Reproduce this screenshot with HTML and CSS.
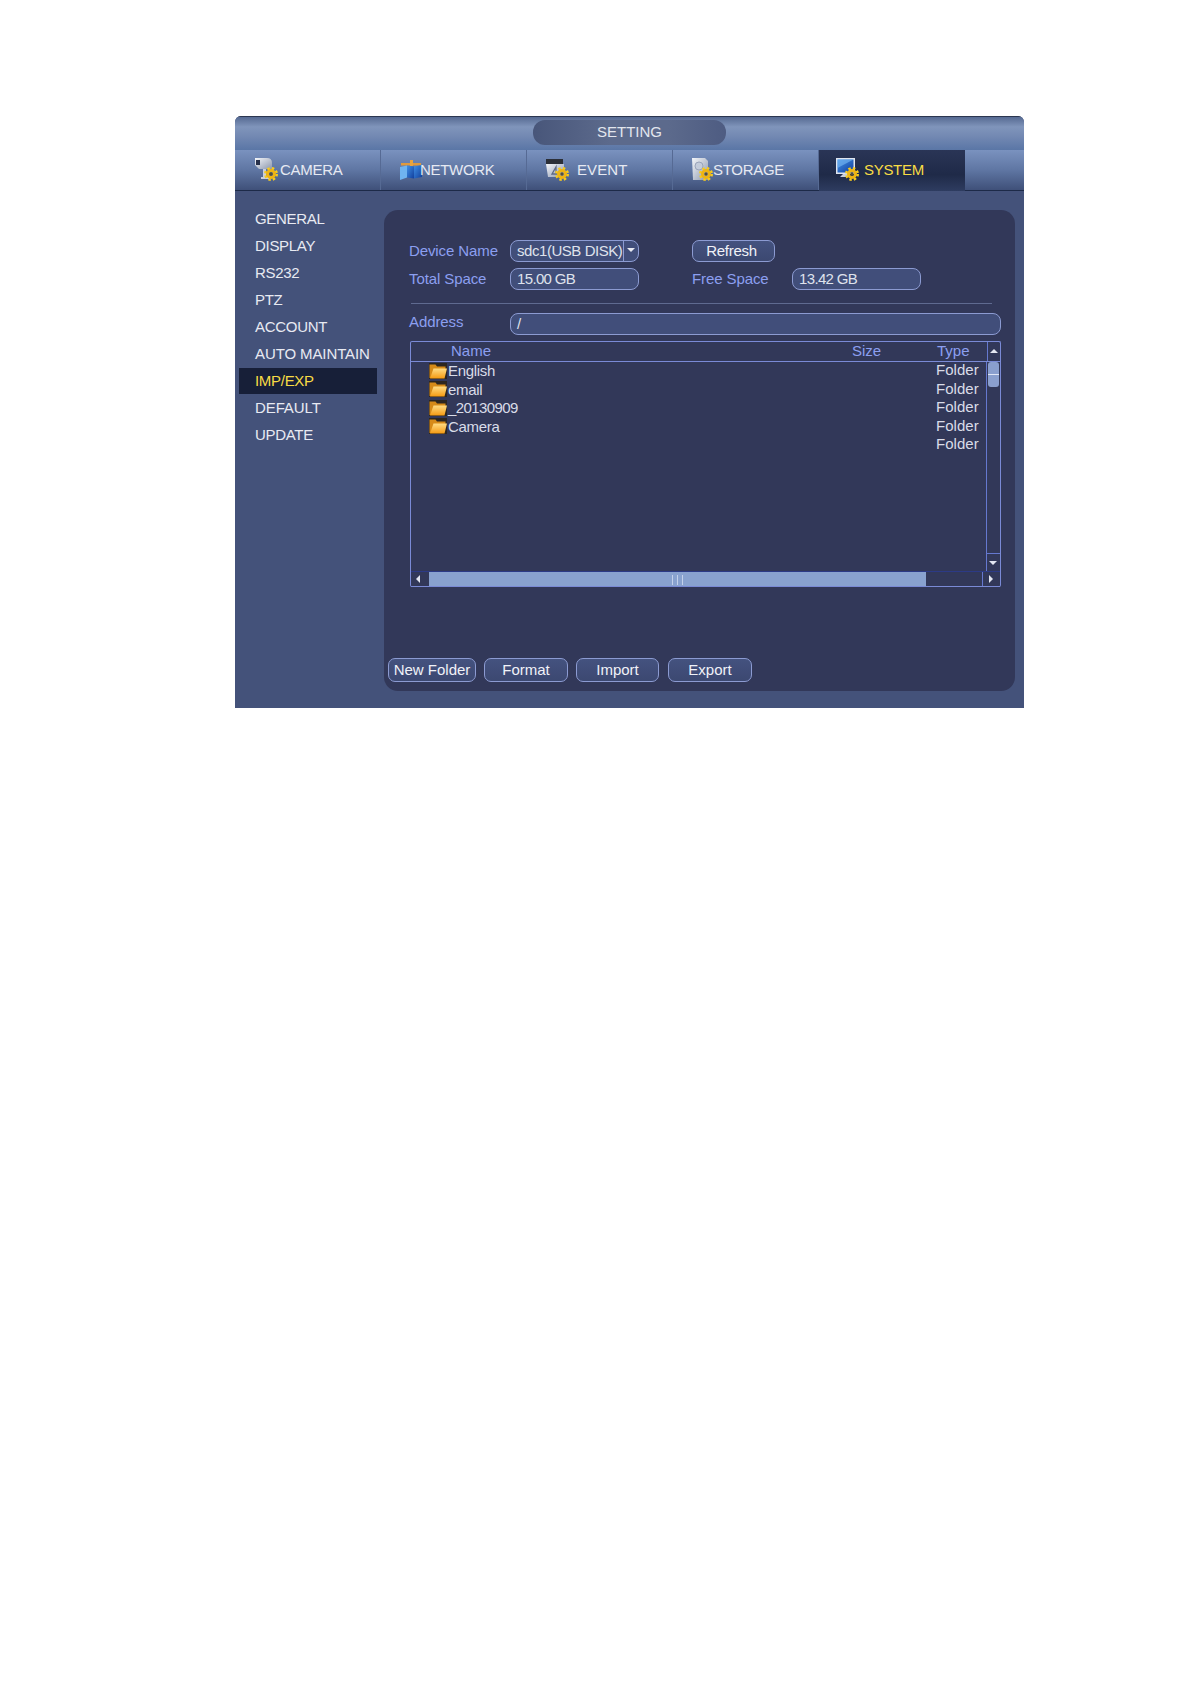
FILE: index.html
```html
<!DOCTYPE html>
<html>
<head>
    <meta charset="utf-8" />
    <title>SETTING</title>
    <link rel="stylesheet" href="styles.css">
</head>
<body>
    <svg class="defs" width="0" height="0">
        <defs>
            <linearGradient id="metal" x1="0" y1="0" x2="1" y2="1">
                <stop offset="0" stop-color="#f4f6fa" />
                <stop offset="1" stop-color="#8c97ad" />
            </linearGradient>
            <linearGradient id="blue" x1="0" y1="0" x2="1" y2="1">
                <stop offset="0" stop-color="#3f8fe6" />
                <stop offset="1" stop-color="#123f9c" />
            </linearGradient>
            <linearGradient id="folderfront" x1="0" y1="0" x2="0" y2="1">
                <stop offset="0" stop-color="#ffdc84" />
                <stop offset="1" stop-color="#f59a12" />
            </linearGradient>
            <symbol id="gear" viewBox="0 0 14 14">
                <circle cx="7" cy="7" r="5.7" fill="none" stroke="#f7cb1e" stroke-width="2.600" stroke-dasharray="2.400 2.100" />
                <circle cx="7" cy="7" r="3.500" fill="none" stroke="#eeb414" stroke-width="3" />
                <circle cx="7" cy="7" r="1.700" fill="#55503a" />
            </symbol>
            <symbol id="folder" viewBox="0 0 18 16">
                <rect x="0" y="0" width="18" height="16" fill="#2c2620" />
                <path d="M0.500 15V1.500h6l1.500 2h8.500V7H5L2 15z" fill="#d68a18" />
                <path d="M1 15.500L4.500 5.500H18L15.500 15.500z" fill="url(#folderfront)" />
            </symbol>
        </defs>
    </svg>

    <div class="window">
        <div class="titlebar">
            <div class="titlepill">SETTING</div>
        </div>

        <div class="tabs">
            <div class="tab tab-camera">
                <svg class="tabicon" width="24" height="24" viewBox="0 0 24 24">
                    <path d="M1 1h12q5 0 5 5v6H5L1 8z" fill="url(#metal)" />
                    <rect x="2" y="3" width="4" height="5" fill="#27304a" />
                    <path d="M9 12h3v8h3v2H7v-2h2z" fill="#c9cfdc" />
                    <use href="#gear" x="10" y="10" width="14" height="14" />
                </svg>
                <span>CAMERA</span>
            </div>
            <div class="tab tab-network">
                <svg class="tabicon" width="22" height="24" viewBox="0 0 22 24">
                    <path d="M1 6h20v2.500H1z" fill="#e09a3c" />
                    <path d="M10 3h3v6h-3z" fill="#e8a33e" />
                    <path d="M0 10l7-1.500v12L0 23z" fill="#6fb4f0" />
                    <path d="M7 8.500l7 1v12l-7-1z" fill="url(#blue)" />
                    <path d="M14 9.500l8-1.500v12l-8 1.500z" fill="url(#blue)" />
                </svg>
                <span>NETWORK</span>
            </div>
            <div class="tab tab-event">
                <svg class="tabicon" width="24" height="24" viewBox="0 0 24 24">
                    <path d="M1 2h17v5H1z" fill="#2b2f38" />
                    <path d="M1 7h18v13H3z" fill="url(#metal)" />
                    <path d="M7 17l4-7v7zM11 17h3" fill="none" stroke="#5d6a86" stroke-width="1.300" />
                    <use href="#gear" x="10" y="10" width="14" height="14" />
                </svg>
                <span>EVENT</span>
            </div>
            <div class="tab tab-storage">
                <svg class="tabicon" width="22" height="24" viewBox="0 0 22 24">
                    <path d="M1 1h13l3 3v19H2z" fill="url(#metal)" />
                    <circle cx="8" cy="9" r="4" fill="#c4ccdb" stroke="#9aa4ba" />
                    <use href="#gear" x="8" y="10" width="14" height="14" />
                </svg>
                <span>STORAGE</span>
            </div>
            <div class="tab tab-system active">
                <svg class="tabicon" width="23" height="24" viewBox="0 0 23 24">
                    <rect x="0" y="1" width="19" height="16" fill="#dfe5ef" />
                    <rect x="1.500" y="2.500" width="16" height="13" fill="url(#blue)" />
                    <path d="M1.500 2.500h16L1.500 11z" fill="#6fb0ee" opacity=".7" />
                    <path d="M7 17h5l1 3H4z" fill="#c9cfdc" />
                    <use href="#gear" x="9" y="10" width="14" height="14" />
                </svg>
                <span>SYSTEM</span>
            </div>
            <div class="tabfill"></div>
        </div>

        <div class="content">
            <ul class="sidemenu">
                <li>GENERAL</li>
                <li>DISPLAY</li>
                <li>RS232</li>
                <li>PTZ</li>
                <li>ACCOUNT</li>
                <li class="loose">AUTO MAINTAIN</li>
                <li class="active">IMP/EXP</li>
                <li class="loose">DEFAULT</li>
                <li>UPDATE</li>
            </ul>

            <div class="panel">
                <div class="row">
                    <label class="fieldlabel">Device Name</label>
                    <div class="field select">
                        <span class="value">sdc1(USB DISK)</span>
                        <span class="selectarrow"></span>
                    </div>
                    <button class="btn refresh">Refresh</button>
                </div>
                <div class="row">
                    <label class="fieldlabel">Total Space</label>
                    <div class="field"><span class="value">15.00 GB</span></div>
                    <label class="fieldlabel freelabel">Free Space</label>
                    <div class="field"><span class="value">13.42 GB</span></div>
                </div>
                <div class="divider"></div>
                <div class="row">
                    <label class="fieldlabel addresslabel">Address</label>
                    <div class="field address"><span class="value">/</span></div>
                </div>

                <div class="filelist">
                    <div class="listhead">
                        <span>Name</span>
                        <span>Size</span>
                        <span>Type</span>
                        <div class="scrollbtn up"></div>
                    </div>
                    <div class="listbody">
                        <div class="names">
                            <div class="namerow"><svg class="foldericon"><use href="#folder" /></svg>English</div>
                            <div class="namerow"><svg class="foldericon"><use href="#folder" /></svg>email</div>
                            <div class="namerow digits"><svg class="foldericon"><use href="#folder" /></svg>_20130909</div>
                            <div class="namerow"><svg class="foldericon"><use href="#folder" /></svg>Camera</div>
                        </div>
                        <div class="types">
                            <div>Folder</div>
                            <div>Folder</div>
                            <div>Folder</div>
                            <div>Folder</div>
                            <div>Folder</div>
                        </div>
                        <div class="vscroll">
                            <div class="vthumb"></div>
                            <div class="scrollbtn down"></div>
                        </div>
                    </div>
                    <div class="hscroll">
                        <div class="hbtn left"></div>
                        <div class="hthumb"></div>
                        <div class="htrack"></div>
                        <div class="hbtn right"></div>
                    </div>
                </div>

                <div class="actions">
                    <button class="btn newfolder">New Folder</button>
                    <button class="btn format">Format</button>
                    <button class="btn import">Import</button>
                    <button class="btn export">Export</button>
                </div>
            </div>
        </div>
    </div>
</body>
</html>
```

FILE: styles.css
```css
body {
    margin: 0;
    background-color: white;
    font-family: "Liberation Sans", Arial, sans-serif;
    font-size: 15px;
}

.defs {
    position: absolute;
}

.window {
    width: 789px;
    height: 592px;
    margin: 116px 0 0 235px;
    background-color: #44527a;
    border-radius: 6px 6px 0 0;
    overflow: hidden;
}

.titlebar {
    height: 34px;
    box-sizing: border-box;
    padding: 3px 0 0 298px;
    border-top: 1px solid #2b3650;
    background: linear-gradient(#566a92, #8095bb 30%, #7288b2 60%, #5a76a6);
}

.titlepill {
    width: 193px;
    height: 25px;
    line-height: 24px;
    text-align: center;
    color: #e3e6ee;
    border-radius: 12px;
    background: linear-gradient(90deg, #48567a, #5c6a8c 40%, #5c6a8c 70%, #4e5c82);
}

.tabs {
    display: flex;
    height: 41px;
    box-sizing: border-box;
    border-bottom: 1px solid #1d2a48;
}

.tab, .tabfill {
    background: linear-gradient(#7a92bf, #5f76a3 50%, #3f5079);
}

.tab {
    display: flex;
    align-items: center;
    width: 146px;
    box-sizing: border-box;
    color: #e6e9f2;
    border-right: 1px solid #566a94;
}

.tabfill {
    flex: 1;
}

.tabicon {
    flex: none;
    margin-top: -3px;
}

.tab span {
    margin-top: -2px;
    letter-spacing: -0.3px;
}

.tab-camera {
    padding-left: 19px;
    gap: 2px;
}

.tab-network {
    padding-left: 19px;
}

.tab-network .tabicon {
    margin-right: -2px;
}

.tab-event {
    padding-left: 18px;
    gap: 8px;
}

.tab-event span {
    letter-spacing: 0.1px;
}

.tab-storage {
    padding-left: 18px;
    gap: 0;
}

.tab-system {
    padding-left: 17px;
    gap: 5px;
}

.tab.active {
    height: 41px;
    color: #f7dc45;
    border-right: 0;
    background: linear-gradient(#2a3556, #1f2a48 60%, #2e3c60);
}

.content {
    display: flex;
}

.sidemenu {
    width: 149px;
    margin: 0;
    padding: 14px 0 0 0;
    list-style: none;
    color: #e8eaf2;
}

.sidemenu li {
    width: 138px;
    height: 27px;
    margin-left: 4px;
    box-sizing: border-box;
    padding-left: 16px;
    line-height: 27px;
    letter-spacing: -0.3px;
}

.sidemenu li.loose {
    letter-spacing: -0.1px;
}

.sidemenu li.active {
    height: 26px;
    margin-top: 1px;
    line-height: 25px;
    color: #f7dc45;
    background-color: #171f38;
}

.panel {
    width: 631px;
    height: 481px;
    margin-top: 19px;
    box-sizing: border-box;
    padding: 30px 0 0 25px;
    background-color: #323859;
    border-radius: 14px;
}

.row {
    display: flex;
    align-items: center;
    height: 22px;
    margin-bottom: 6px;
}

.fieldlabel {
    width: 101px;
    margin-bottom: 2px;
    letter-spacing: -0.1px;
    color: #8c9ff0;
}

.freelabel {
    width: 100px;
    margin-left: 53px;
}

.addresslabel {
    margin-bottom: 6px;
}

.field {
    display: flex;
    align-items: center;
    width: 129px;
    height: 22px;
    box-sizing: border-box;
    padding-left: 6px;
    color: #dfe2ec;
    background-color: #414e7a;
    border: 1px solid #8c9bd2;
    border-radius: 8px;
}

.value {
    margin-bottom: 2px;
    letter-spacing: -0.65px;
}

.select {
    position: relative;
}

.select .value {
    letter-spacing: -0.45px;
}

.selectarrow {
    position: absolute;
    right: 0;
    top: 0;
    width: 14px;
    height: 20px;
    border-left: 1px solid #8c9bd2;
}

.selectarrow::after {
    content: "";
    position: absolute;
    left: 3px;
    top: 7px;
    border: 4px solid transparent;
    border-top-color: #e8eaf2;
}

.address {
    width: 491px;
}

.divider {
    width: 581px;
    height: 1px;
    margin: 13px 0 9px 2px;
    background-color: #5f6a90;
}

.btn {
    height: 24px;
    padding: 0 0 2px 0;
    font-family: inherit;
    font-size: 15px;
    color: #f0f2f8;
    background: linear-gradient(#44527f, #3c4871);
    border: 1px solid #8c9bd2;
    border-radius: 7px;
}

.refresh {
    width: 83px;
    height: 22px;
    margin-left: 53px;
    padding-right: 4px;
    letter-spacing: -0.3px;
}

.filelist {
    width: 591px;
    height: 246px;
    margin: 0 0 0 1px;
    box-sizing: border-box;
    border: 1px solid #7a8ad6;
    border-bottom: 0;
    border-radius: 2px;
}

.listhead {
    display: grid;
    grid-template-columns: 401px 85px 50px 13px;
    height: 20px;
    box-sizing: border-box;
    padding-left: 40px;
    line-height: 18px;
    color: #8c9ff0;
    border-bottom: 1px solid #7a8ad6;
}

.scrollbtn {
    position: relative;
    border-left: 1px solid #6578cf;
}

.scrollbtn::after {
    content: "";
    position: absolute;
    left: 2px;
    border: 4px solid transparent;
}

.up {
    height: 19px;
}

.up::after {
    top: 3px;
    border-bottom-color: #e4e7f2;
}

.down {
    height: 17px;
    border-top: 1px solid #6578cf;
}

.down::after {
    top: 7px;
    border-top-color: #e4e7f2;
}

.listbody {
    display: flex;
    height: 209px;
    position: relative;
    color: #d9dce8;
}

.names {
    width: 525px;
    padding: 1px 0 0 18px;
    box-sizing: border-box;
}

.namerow {
    display: flex;
    align-items: center;
    gap: 1px;
    height: 15px;
    margin-bottom: 3.600px;
    letter-spacing: -0.3px;
}

.namerow.digits {
    letter-spacing: -0.6px;
}

.foldericon {
    flex: none;
    width: 18px;
    height: 16px;
}

.types {
    width: 50px;
    margin-left: 1px;
}

.types div {
    height: 15px;
    line-height: 15px;
    margin-bottom: 3.500px;
}

.vscroll {
    display: flex;
    flex-direction: column;
    justify-content: space-between;
    width: 13px;
    border-left: 1px solid #6578cf;
    margin-left: auto;
}

.vscroll .scrollbtn {
    border-left: 0;
}

.vthumb {
    width: 11px;
    height: 25px;
    margin: 0 0 0 1px;
    background: linear-gradient(#8a9fce 48%, #dfe5f5 48%, #dfe5f5 52%, #8a9fce 52%);
    border-radius: 3px;
}

.hscroll {
    display: flex;
    height: 16px;
    box-sizing: border-box;
    border-top: 1px solid #2c3a86;
    border-bottom: 1px solid #7a8ad6;
}

.hbtn {
    position: relative;
}

.hbtn::after {
    content: "";
    position: absolute;
    top: 3px;
    border: 4px solid transparent;
}

.left {
    width: 18px;
}

.left::after {
    left: 1px;
    border-right-color: #e4e7f2;
}

.right {
    width: 17px;
    border-left: 1px solid #6578cf;
}

.right::after {
    left: 6px;
    border-left-color: #e4e7f2;
}

.hthumb {
    position: relative;
    width: 497px;
    background-color: #89a2cf;
}

.hthumb::after {
    content: "";
    position: absolute;
    left: 243px;
    top: 3px;
    width: 9px;
    height: 10px;
    border-left: 1px solid #c4d1ea;
    border-right: 1px solid #c4d1ea;
    background: linear-gradient(#c4d1ea, #c4d1ea) center / 1px 100% no-repeat;
}

.htrack {
    flex: 1;
}

.actions {
    display: flex;
    margin: 71px 0 0 -21px;
}

.newfolder {
    width: 88px;
    margin-right: 8px;
}

.format {
    width: 84px;
    margin-right: 8px;
}

.import {
    width: 83px;
    margin-right: 9px;
}

.export {
    width: 84px;
}
```
